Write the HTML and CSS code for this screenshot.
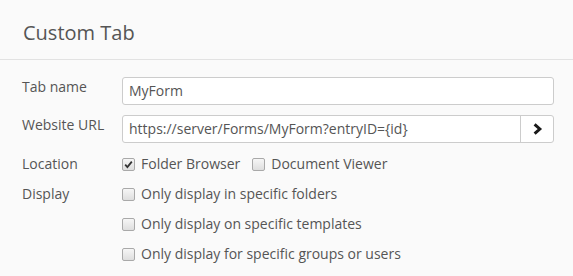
FILE: index.html
```html
<!DOCTYPE html>
<html>
<head>
<meta charset="utf-8">
<link rel="stylesheet" href="styles.css">
</head>
<body>
<div class="header"><h1 class="title">Custom Tab</h1></div>
<div class="form">
  <div class="label">Tab name</div>
  <div class="control"><div class="input"><span class="value">MyForm</span></div></div>

  <div class="label">Website URL</div>
  <div class="control">
    <div class="input group">
      <span class="value">https://server/Forms/MyForm?entryID={id}</span>
      <span class="btn"><svg width="11" height="12" viewBox="0 0 11 12"><path d="M2.6 1.4 L7.8 6 L2.6 10.6" fill="none" stroke="#1a1a1a" stroke-width="3" stroke-linejoin="miter"/></svg></span>
    </div>
  </div>

  <div class="label lower">Location</div>
  <div class="control inline lower">
    <label class="check"><span class="box checked"><svg width="9" height="9" viewBox="0 0 9 9"><path d="M1.2 4.6 L3.4 7 L7.8 1.6" fill="none" stroke="#333" stroke-width="1.8"/></svg></span>Folder Browser</label>
    <label class="check"><span class="box"></span>Document Viewer</label>
  </div>

  <div class="label">Display</div>
  <div class="control stack">
    <label class="check"><span class="box"></span>Only display in specific folders</label>
    <label class="check"><span class="box"></span>Only display on specific templates</label>
    <label class="check"><span class="box"></span>Only display for specific groups or users</label>
  </div>
</div>
</body>
</html>
```
FILE: styles.css
```css
html, body {
  margin: 0;
  padding: 0;
  background: #fafafa;
  font-family: "Open Sans", "Liberation Sans", sans-serif;
  color: #555;
}
.header {
  height: 60px;
  box-sizing: border-box;
  border-bottom: 1px solid #e2e2e2;
  padding: 19px 22px 0 23px;
}
.title {
  margin: 0;
  font-size: 20px;
  font-weight: 400;
  line-height: 27px;
  color: #555;
}
.form {
  display: grid;
  grid-template-columns: 100px 432px;
  row-gap: 10px;
  padding: 17px 0 0 22px;
  font-size: 14px;
  line-height: 20px;
}
.lower {
  margin-top: 1px;
}
.label {
  color: #555;
}
.input {
  height: 28px;
  box-sizing: border-box;
  border: 1px solid #ccc;
  border-radius: 3px;
  background: #fff;
  display: flex;
  align-items: center;
  padding-left: 6px;
  color: #555;
}
.input .value {
  flex: 1;
  line-height: 20px;
}
.btn {
  width: 32px;
  align-self: stretch;
  border-left: 1px solid #ccc;
  display: flex;
  align-items: center;
  justify-content: center;
}
.inline {
  display: flex;
  gap: 12px;
}
.stack {
  display: flex;
  flex-direction: column;
  gap: 10px;
}
.check {
  display: flex;
  align-items: center;
  gap: 6px;
  color: #555;
}
.box {
  width: 11px;
  height: 11px;
  border: 1px solid #a9a9a9;
  border-radius: 2px;
  background: linear-gradient(#f6f6f6, #dedede);
  display: flex;
  align-items: center;
  justify-content: center;
  flex: none;
}
```
